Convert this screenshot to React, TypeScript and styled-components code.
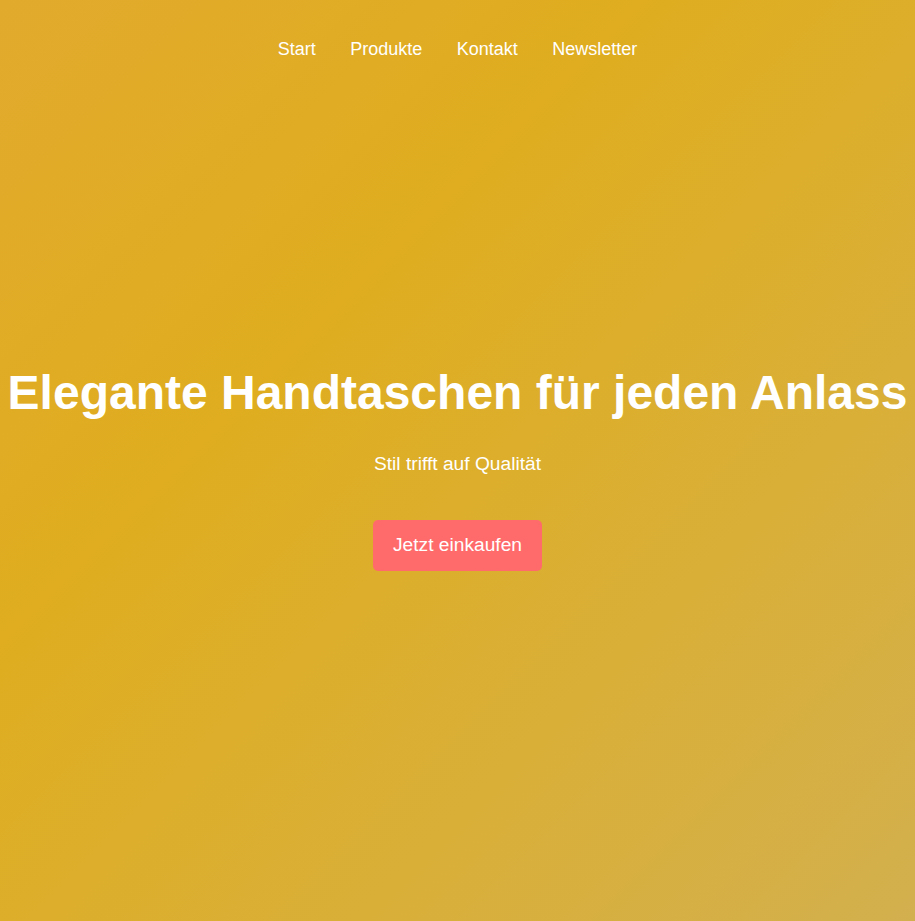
import React from "react";
import styled, { createGlobalStyle } from "styled-components";

const GlobalStyle = createGlobalStyle`
  html, body {
    margin: 0;
    padding: 0;
  }
  body {
    font-family: "Liberation Sans", Arial, sans-serif;
    color: #ffffff;
  }
  * { box-sizing: border-box; }
`;

const Page = styled.div`
  min-height: 100vh;
  display: grid;
  grid-template-rows: auto 1fr;
  background: linear-gradient(135deg, #e2aa2d 0%, #dfad1f 35%, #d9af38 70%, #d3b04e 100%);
`;

const Header = styled.header`
  padding: 39px 0 37px;
  display: flex;
  justify-content: center;
`;

const Nav = styled.nav`
  display: flex;
  gap: 34.5px;
`;

const NavLink = styled.a`
  color: #ffffff;
  text-decoration: none;
  font-size: 18px;
  line-height: 21px;
`;

const Hero = styled.main`
  display: flex;
  flex-direction: column;
  align-items: center;
  justify-content: center;
  text-align: center;
  padding-bottom: 82px;
`;

const Title = styled.h1`
  margin: 0 0 33px;
  font-size: 48px;
  line-height: 55px;
  font-weight: 700;
  white-space: nowrap;
`;

const Subtitle = styled.p`
  margin: 0 0 45px;
  font-size: 19.2px;
  line-height: 22px;
`;

const CTA = styled.a`
  display: inline-block;
  background: #ff6b6b;
  color: #ffffff;
  text-decoration: none;
  font-size: 19.2px;
  line-height: 21px;
  padding: 14px 20px 16px;
  border-radius: 5px;
`;

export default function App() {
  const links = ["Start", "Produkte", "Kontakt", "Newsletter"];
  return (
    <>
      <GlobalStyle />
      <Page>
        <Header>
          <Nav>
            {links.map((l) => (
              <NavLink key={l} href="#">
                {l}
              </NavLink>
            ))}
          </Nav>
        </Header>
        <Hero>
          <Title>Elegante Handtaschen für jeden Anlass</Title>
          <Subtitle>Stil trifft auf Qualität</Subtitle>
          <CTA href="#">Jetzt einkaufen</CTA>
        </Hero>
      </Page>
    </>
  );
}
